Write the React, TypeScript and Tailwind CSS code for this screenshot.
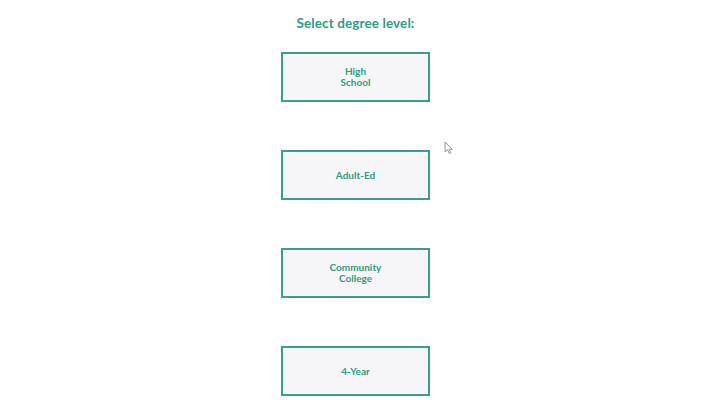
export default function App() {
  const levels = [["High", "School"], ["Adult-Ed"], ["Community", "College"], ["4-Year"]];

  return (
    <div className="relative w-[720px] h-[405px] bg-white overflow-hidden" style={{ fontFamily: "Lato, 'Noto Sans', sans-serif" }}>
      <div className="flex flex-col items-center pt-[14px] pr-[9px]">
        <h1 className="text-[13.5px] font-bold text-[#2e9c86] leading-[18px] tracking-[0.1px]">Select degree level:</h1>
        <div className="mt-[20px] flex flex-col gap-[48px]">
          {levels.map((lines, idx) => (
            <button
              key={idx}
              className="w-[149px] h-[50px] border-2 border-[#3a9e8c] bg-[#f6f6f8] flex flex-col items-center justify-center text-[10px] font-bold text-[#2e9c86] leading-[11px]"
            >
              {lines.map((l) => (
                <span key={l}>{l}</span>
              ))}
            </button>
          ))}
        </div>
      </div>

      {/* mouse cursor */}
      <svg className="absolute left-[444px] top-[141px]" width="10" height="14" viewBox="0 0 10 14">
        <path d="M1 1 L1 11 L3.5 8.7 L5.3 12.6 L6.8 11.9 L5 8.2 L8.4 8.2 Z" fill="#fff" stroke="#8a8a8a" strokeWidth="0.9" strokeLinejoin="round" />
      </svg>
    </div>
  );
}
